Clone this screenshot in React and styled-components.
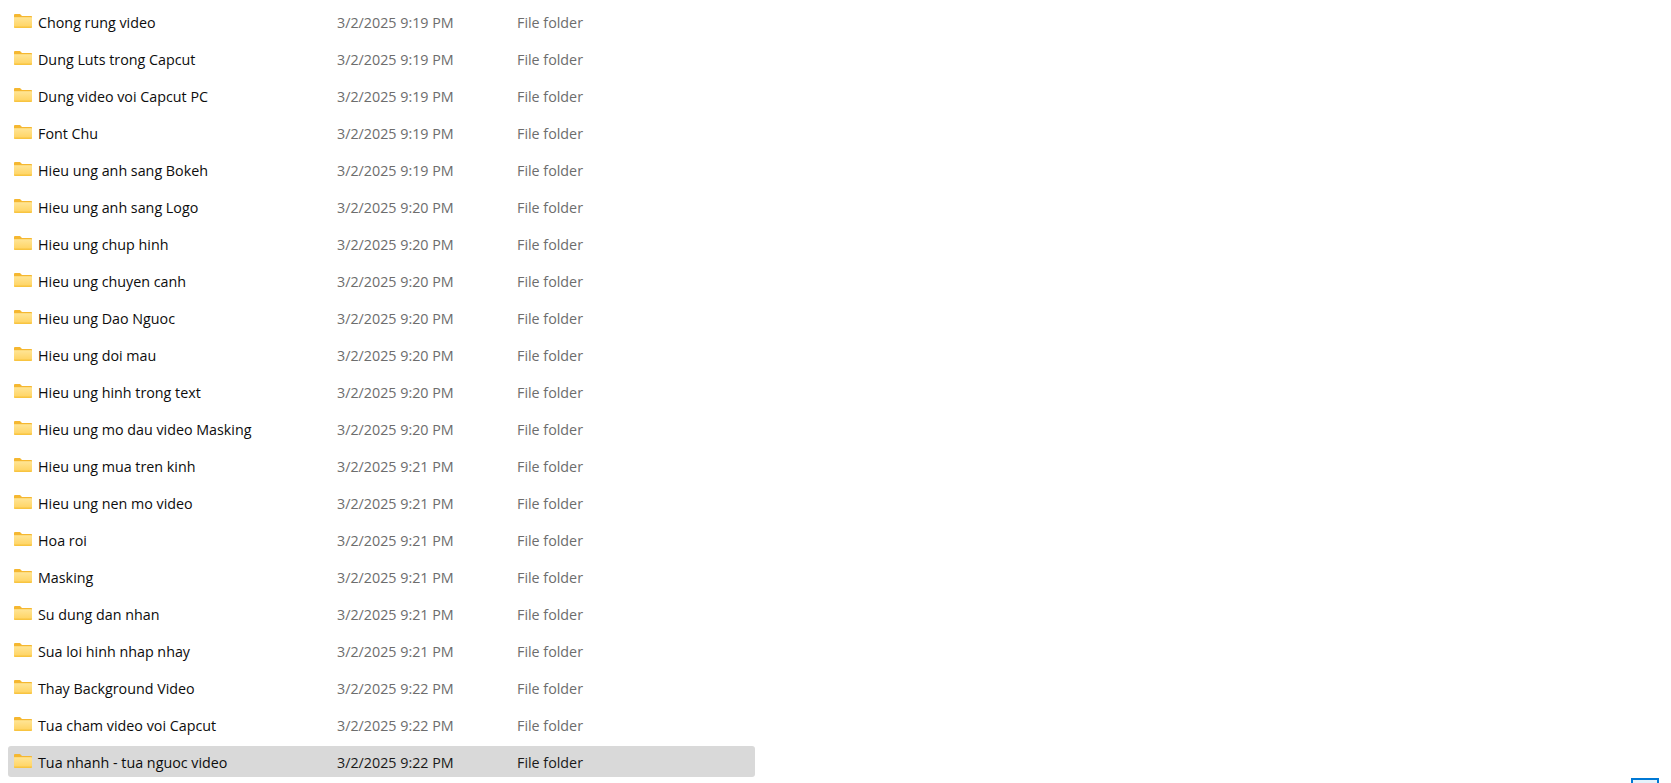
import React from 'react';
import styled, { createGlobalStyle } from 'styled-components';

const GlobalStyle = createGlobalStyle`
    html, body {
        margin: 0;
        height: 100%;
        overflow: hidden;
        background: #fff;
    }
`;

const Page = styled.div`
    position: relative;
    height: 783px;
    overflow: hidden;
    font-family: "Open Sans", "Noto Sans", sans-serif;
    font-size: 14.3px;
`;

const List = styled.div`
    display: flex;
    flex-direction: column;
    gap: 6px;
    width: 747px;
    padding: 6px 0 0 8px;
`;

const Row = styled.div`
    display: grid;
    grid-template-columns: 30px 299px 180px 1fr;
    align-items: center;
    box-sizing: border-box;
    height: 31px;
    padding-top: 2px;
    border-radius: 3px;
    background: ${p => (p.$selected ? '#d9d9d9' : 'transparent')};
`;

const NameCell = styled.div`
    color: #0d0d0d;
    white-space: nowrap;
`;

const InfoCell = styled.div`
    color: ${p => (p.$selected ? '#1a1a1a' : '#6d6d6d')};
    white-space: nowrap;
`;

const IconCell = styled.div`
    display: flex;
    padding: 0 0 3px 6px;
`;

const ResizeHandle = styled.div`
    position: absolute;
    left: 1631px;
    top: 778px;
    width: 24px;
    height: 20px;
    border: 2px solid #0078d4;
    background: #e5f3fb;
`;

const FolderIcon = () => (
    <svg width="18" height="14" viewBox="0 0 18 14">
        <defs>
            <linearGradient id="folderBody" x1="0" y1="0" x2="0" y2="1">
                <stop offset="0" stopColor="#ffe596" />
                <stop offset="1" stopColor="#ffd566" />
            </linearGradient>
        </defs>
        <path d="M0 1.2C0 .5.5 0 1.2 0h4.3c.4 0 .7.1 1 .4L8 2h9c.6 0 1 .4 1 1v2H0z" fill="#f5b730" />
        <path d="M0 3.2h18V13c0 .6-.4 1-1 1H1c-.6 0-1-.4-1-1z" fill="#f8c440" />
        <path d="M0 3.2h17c.6 0 1 .4 1 1V12.4H0z" fill="url(#folderBody)" />
    </svg>
);

const folders = [
    ['Chong rung video', '3/2/2025 9:19 PM'],
    ['Dung Luts trong Capcut', '3/2/2025 9:19 PM'],
    ['Dung video voi Capcut PC', '3/2/2025 9:19 PM'],
    ['Font Chu', '3/2/2025 9:19 PM'],
    ['Hieu ung anh sang Bokeh', '3/2/2025 9:19 PM'],
    ['Hieu ung anh sang Logo', '3/2/2025 9:20 PM'],
    ['Hieu ung chup hinh', '3/2/2025 9:20 PM'],
    ['Hieu ung chuyen canh', '3/2/2025 9:20 PM'],
    ['Hieu ung Dao Nguoc', '3/2/2025 9:20 PM'],
    ['Hieu ung doi mau', '3/2/2025 9:20 PM'],
    ['Hieu ung hinh trong text', '3/2/2025 9:20 PM'],
    ['Hieu ung mo dau video Masking', '3/2/2025 9:20 PM'],
    ['Hieu ung mua tren kinh', '3/2/2025 9:21 PM'],
    ['Hieu ung nen mo video', '3/2/2025 9:21 PM'],
    ['Hoa roi', '3/2/2025 9:21 PM'],
    ['Masking', '3/2/2025 9:21 PM'],
    ['Su dung dan nhan', '3/2/2025 9:21 PM'],
    ['Sua loi hinh nhap nhay', '3/2/2025 9:21 PM'],
    ['Thay Background Video', '3/2/2025 9:22 PM'],
    ['Tua cham video voi Capcut', '3/2/2025 9:22 PM'],
    ['Tua nhanh - tua nguoc video', '3/2/2025 9:22 PM'],
];

function App() {
    return (
        <Page>
            <GlobalStyle />
            <List>
                {folders.map(([name, date], i) => {
                    const selected = i === folders.length - 1;
                    return (
                        <Row key={name} $selected={selected}>
                            <IconCell><FolderIcon /></IconCell>
                            <NameCell>{name}</NameCell>
                            <InfoCell $selected={selected}>{date}</InfoCell>
                            <InfoCell $selected={selected}>File folder</InfoCell>
                        </Row>
                    );
                })}
            </List>
            <ResizeHandle />
        </Page>
    );
}

export default App;
